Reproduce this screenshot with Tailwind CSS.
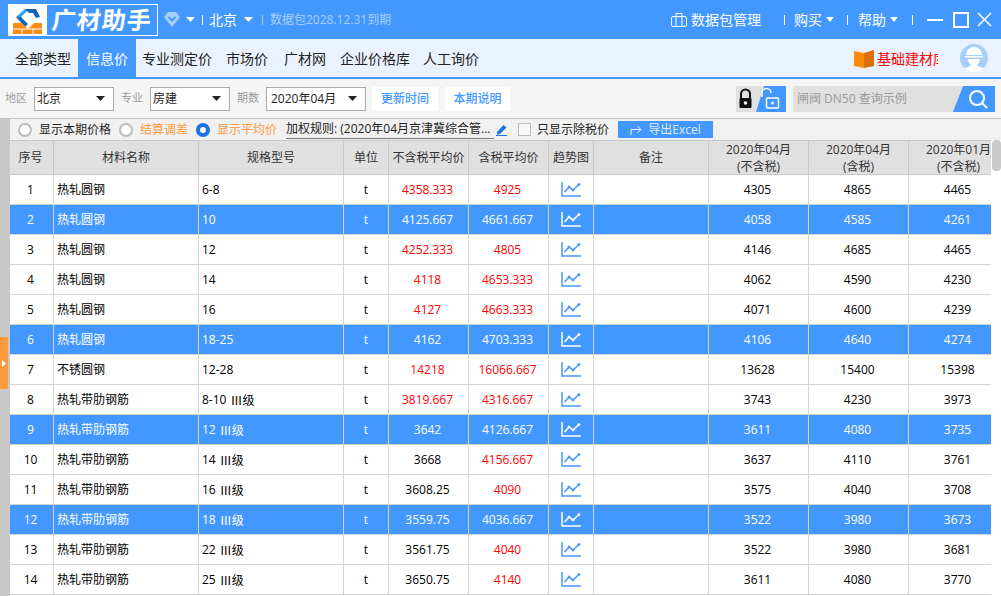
<!DOCTYPE html>
<html lang="zh-CN">
<head>
    <meta charset="UTF-8">
    <title>广材助手</title>
    <script src="https://cdn.jsdelivr.net/npm/@tailwindcss/browser@4"></script>
</head>
<body class="w-[1001px] h-[596px] overflow-hidden bg-white text-[12px] text-[#222] font-['Open_Sans','Noto_Sans_CJK_SC',sans-serif]">
    <!-- Title bar -->
    <div class="h-[39px] bg-[#4398ff] flex items-center text-white">
        <div class="ml-[8px] w-[150px] h-[32px] border border-white flex">
            <div class="w-[38px] bg-white">
                <svg width="38" height="30" viewBox="0 0 38 30">
                    <path d="M7 12 L16 4 L20 4 L12 12 Z" fill="#22a7f0"/>
                    <path d="M7 12 L12 12 L19 19 L16 22 Z" fill="#1464b4"/>
                    <path d="M16 4 L27 4 L31 12 L27 13 L24 8 L20 8 Z" fill="#1464b4"/>
                    <path d="M4 18 L13 18 L19 24 L25 18 L33 18 L33 29 L4 29 Z" fill="#ff8a14"/>
                    <path d="M4 24 H33 M13 24 V29 M24 24 V29" stroke="#fff" stroke-width="1"/>
                </svg>
            </div>
            <div class="flex-1 flex items-center pl-[5px] text-[24px] leading-none font-bold -skew-x-6 tracking-[1px]">广材助手</div>
        </div>
        <svg class="ml-[6px]" width="16" height="17" viewBox="0 0 16 17"><path d="M4 1 H12 L16 6 L8 16 L0 6 Z" fill="#a9cff9"/><path d="M4.500 6 L8 9.500 L11.500 6" fill="none" stroke="#4398ff" stroke-width="2"/></svg>
        <svg class="ml-[6px]" width="9" height="5" viewBox="0 0 9 5"><path d="M0 0 H9 L4.500 5 Z" fill="#fff"/></svg>
        <div class="ml-[7px] w-px h-[10px] bg-white"></div>
        <span class="ml-[6px] text-[14px]">北京</span>
        <svg class="ml-[7px]" width="9" height="5" viewBox="0 0 9 5"><path d="M0 0 H9 L4.500 5 Z" fill="#fff"/></svg>
        <div class="ml-[9px] w-px h-[10px] bg-[#a9cff9]"></div>
        <span class="ml-[7px] text-[#a9cff9]">数据包2028.12.31到期</span>

        <svg class="ml-auto" width="16" height="15" viewBox="0 0 16 15" fill="none" stroke="#fff" stroke-width="1"><rect x="0.500" y="4.500" width="15" height="10" rx="1.500"/><path d="M5 14 V1.500 H11 V14"/></svg>
        <span class="ml-[4px] text-[14px]">数据包管理</span>
        <div class="ml-[23px] w-px h-[10px] bg-white"></div>
        <span class="ml-[9px] text-[14px]">购买</span>
        <svg class="ml-[4px]" width="8" height="5" viewBox="0 0 8 5"><path d="M0 0 H8 L4 5 Z" fill="#fff"/></svg>
        <div class="ml-[13px] w-px h-[10px] bg-white"></div>
        <span class="ml-[10px] text-[14px]">帮助</span>
        <svg class="ml-[4px]" width="8" height="5" viewBox="0 0 8 5"><path d="M0 0 H8 L4 5 Z" fill="#fff"/></svg>
        <div class="ml-[14px] w-px h-[10px] bg-white"></div>
        <div class="ml-[14px] w-[16px] h-[2px] bg-white"></div>
        <div class="ml-[10px] w-[16px] h-[16px] border-2 border-white"></div>
        <svg class="ml-[8px] mr-[9px]" width="15" height="15" viewBox="0 0 15 15"><path d="M1 1 L14 14 M14 1 L1 14" stroke="#fff" stroke-width="1.500"/></svg>
    </div>

    <!-- Nav tabs -->
    <div class="h-[40px] bg-[#ebf2ff] border-b-2 border-[#4398ff] flex items-center text-[14px]">
        <span class="ml-[15px]">全部类型</span>
        <span class="ml-[7px] w-[58px] h-full flex items-center justify-center bg-[#4398ff] text-white">信息价</span>
        <span class="ml-[6px]">专业测定价</span>
        <span class="ml-[14px]">市场价</span>
        <span class="ml-[16px]">广材网</span>
        <span class="ml-[14px]">企业价格库</span>
        <span class="ml-[13px]">人工询价</span>
        <svg class="ml-auto" width="20" height="19" viewBox="0 0 20 19"><path d="M0 2 L10 4 V19 L0 17 Z" fill="#ff8a0a"/><path d="M10 4 L20 1 V17 L10 19 Z" fill="#d96f06"/></svg>
        <span class="ml-[3px] w-[61px] overflow-hidden whitespace-nowrap text-[#ff0000]">基础建材库</span>
        <svg class="ml-[22px] mr-[13px]" width="28" height="28" viewBox="0 0 28 28">
            <circle cx="14" cy="14" r="14" fill="#a6d0fb"/>
            <path d="M6 11 A8 8 0 0 1 22 11 Z" fill="#fff"/>
            <rect x="5" y="12" width="18" height="1.500" fill="#fff"/>
            <path d="M8 15 H20 C20 19 17 20 17 21 C19 23 22 24 24 24 A14 14 0 0 1 4 24 C6 24 9 23 11 21 C11 20 8 19 8 15 Z" fill="#fff"/>
        </svg>
    </div>

    <!-- Filter toolbar -->
    <div class="h-[40px] bg-[#f5f5f5] border-b border-[#c4c4c4] flex items-center">
        <span class="ml-[5px] w-[22px] text-[11px] text-[#9a9a9a]">地区</span>
        <div class="ml-[7px] w-[80px] h-[24px] bg-white border border-[#aaa] flex items-center justify-between pl-[2px] pr-[8px]">北京<svg width="9" height="5" viewBox="0 0 9 5"><path d="M0 0 H9 L4.500 5 Z" fill="#222"/></svg></div>
        <span class="ml-[7px] w-[22px] text-[11px] text-[#9a9a9a]">专业</span>
        <div class="ml-[7px] w-[80px] h-[24px] bg-white border border-[#aaa] flex items-center justify-between pl-[2px] pr-[8px]">房建<svg width="9" height="5" viewBox="0 0 9 5"><path d="M0 0 H9 L4.500 5 Z" fill="#222"/></svg></div>
        <span class="ml-[7px] w-[22px] text-[11px] text-[#9a9a9a]">期数</span>
        <div class="ml-[7px] w-[100px] h-[24px] bg-white border border-[#aaa] flex items-center justify-between pl-[4px] pr-[8px]">2020年04月<svg width="9" height="5" viewBox="0 0 9 5"><path d="M0 0 H9 L4.500 5 Z" fill="#222"/></svg></div>
        <div class="ml-[6px] w-[66px] h-[24px] bg-white flex items-center justify-center font-medium text-[#4398ff]">更新时间</div>
        <div class="ml-[7px] w-[65px] h-[24px] bg-white flex items-center justify-center font-medium text-[#4398ff]">本期说明</div>

        <!-- lock toggle -->
        <div class="ml-auto w-[50px] h-[26px] bg-[#e0e0e0] relative overflow-hidden">
            <svg class="absolute left-0 top-0" width="50" height="26" viewBox="0 0 50 26">
                <path d="M28 0 H50 V26 H20 Z" fill="#4398ff"/>
                <path d="M5 12 V8 A4.500 4.500 0 0 1 14 8 V12" fill="none" stroke="#111" stroke-width="2"/>
                <rect x="3.500" y="12" width="12" height="10" rx="1" fill="#111"/><circle cx="9.500" cy="17" r="1.800" fill="#fff"/>
                <path d="M26 11 V7 A4.500 4.500 0 0 1 35 7" fill="none" stroke="#fff" stroke-width="1.500"/>
                <rect x="30.500" y="12" width="12" height="10" rx="1" fill="none" stroke="#fff" stroke-width="1.500"/><circle cx="36.500" cy="17" r="1.500" fill="#fff"/>
            </svg>
        </div>
        <!-- search -->
        <div class="ml-[7px] mr-[6px] w-[202px] h-[26px] bg-[#e0e0e0] relative flex items-center pl-[4px] text-[#999] overflow-hidden">
            闸阀 DN50 查询示例
            <svg class="absolute right-0 top-0" width="42" height="26" viewBox="0 0 42 26">
                <path d="M10 0 H42 V26 H0 Z" fill="#4398ff"/>
                <circle cx="24" cy="12" r="7" fill="none" stroke="#fff" stroke-width="2"/>
                <path d="M29 17 L34 22" stroke="#fff" stroke-width="2"/>
            </svg>
        </div>
    </div>

    <!-- Options row + table -->
    <div class="flex h-[477px]">
        <div class="w-[10px] shrink-0 bg-[#c8c8c6] relative">
            <div class="absolute left-0 top-[218px] w-[8px] h-[52px] bg-[#ff9a3c] flex items-center justify-center">
                <svg width="4" height="7" viewBox="0 0 4 7"><path d="M0 0 L4 3.500 L0 7 Z" fill="#fff"/></svg>
            </div>
        </div>
        <div class="flex-1 min-w-0 flex flex-col">
            <div class="h-[21px] shrink-0 bg-[#f1f1f1] flex items-center">
                <span class="ml-[8px] w-[14px] h-[14px] rounded-full border-2 border-[#bbb] bg-white"></span>
                <span class="ml-[7px]">显示本期价格</span>
                <span class="ml-[8px] w-[14px] h-[14px] rounded-full border-2 border-[#bbb] bg-white"></span>
                <span class="ml-[7px] text-[#ff9a3c]">结算调差</span>
                <span class="ml-[8px] w-[14px] h-[14px] rounded-full border-[4px] border-[#1a73e8] bg-white"></span>
                <span class="ml-[7px] text-[#ff9a3c]">显示平均价</span>
                <span class="ml-[9px] w-[208px] border-b border-[#777] whitespace-nowrap overflow-hidden">加权规则: (2020年04月京津冀综合管...</span>
                <svg class="ml-[2px]" width="11" height="12" viewBox="0 0 11 12"><path d="M1 8 L7.500 1 L10.500 3.500 L4 10 L1 10.500 Z" fill="#1a73e8"/><rect x="0" y="11" width="11" height="1" fill="#1a73e8"/></svg>
                <span class="ml-[11px] w-[13px] h-[13px] border border-[#bbb] bg-[#f7f7f7]"></span>
                <span class="ml-[6px]">只显示除税价</span>
                <div class="ml-[9px] w-[95px] h-[17px] bg-[#4398ff] text-white flex items-center justify-center gap-[6px]">
                    <svg width="12" height="10" viewBox="0 0 12 10" fill="none" stroke="#fff" stroke-width="1"><path d="M1 10 V4.500 H10.500 M7.500 1 L11 4.500 L7.500 8"/></svg>
                    <span class="text-[#dcebff]">导出Excel</span>
                </div>
            </div>
            <div class="flex flex-1 min-h-0 overflow-hidden">
                <div class="w-[981px] overflow-hidden">
                    <div class="w-[1099px]" id="grid">
                        <div class="grid grid-cols-[44px_145px_145px_45px_80px_80px_45px_115px_100px_100px_100px] h-[35px] bg-[#e0e0e0] border-y border-[#c8c8c8] text-[#333] text-center">
                            <div class="flex items-center justify-center pr-[2px] border-r border-[#c8c8c8]">序号</div>
                            <div class="flex items-center justify-center border-r border-[#c8c8c8]">材料名称</div>
                            <div class="flex items-center justify-center border-r border-[#c8c8c8]">规格型号</div>
                            <div class="flex items-center justify-center border-r border-[#c8c8c8]">单位</div>
                            <div class="flex items-center justify-center border-r border-[#c8c8c8]">不含税平均价</div>
                            <div class="flex items-center justify-center border-r border-[#c8c8c8]">含税平均价</div>
                            <div class="flex items-center justify-center border-r border-[#c8c8c8]">趋势图</div>
                            <div class="flex items-center justify-center border-r border-[#c8c8c8]">备注</div>
                            <div class="leading-[17px] border-r border-[#c8c8c8]">2020年04月<br>(不含税)</div>
                            <div class="leading-[17px] border-r border-[#c8c8c8]">2020年04月<br>(含税)</div>
                            <div class="leading-[17px] border-r border-[#c8c8c8]">2020年01月<br>(不含税)</div>
                        </div>
                    </div>
                </div>
                <div class="w-[10px] shrink-0 bg-white">
                    <div class="mx-auto w-[9px] h-[31px] rounded-[4px] bg-[#c9c9c9]"></div>
                </div>
            </div>
        </div>
    </div>

    <script>
        // the wide roman numeral only exists in the CJK font
        const g3 = '<span class="ml-[4px] font-[family-name:Noto_Sans_CJK_SC]">Ⅲ级</span>';

        // no, name, spec, avg excl, avg incl, three price columns, selected, red flags
        const rows = [
            [1, '热轧圆钢', '6-8', '4358.333', '4925', 4305, 4865, 4465, 0, 1, 1],
            [2, '热轧圆钢', '10', '4125.667', '4661.667', 4058, 4585, 4261, 1, 0, 0],
            [3, '热轧圆钢', '12', '4252.333', '4805', 4146, 4685, 4465, 0, 1, 1],
            [4, '热轧圆钢', '14', '4118', '4653.333', 4062, 4590, 4230, 0, 1, 1],
            [5, '热轧圆钢', '16', '4127', '4663.333', 4071, 4600, 4239, 0, 1, 1],
            [6, '热轧圆钢', '18-25', '4162', '4703.333', 4106, 4640, 4274, 1, 0, 0],
            [7, '不锈圆钢', '12-28', '14218', '16066.667', 13628, 15400, 15398, 0, 1, 1],
            [8, '热轧带肋钢筋', '8-10' + g3, '3819.667', '4316.667', 3743, 4230, 3973, 0, 1, 1],
            [9, '热轧带肋钢筋', '12' + g3, '3642', '4126.667', 3611, 4080, 3735, 1, 0, 0],
            [10, '热轧带肋钢筋', '14' + g3, '3668', '4156.667', 3637, 4110, 3761, 0, 0, 1],
            [11, '热轧带肋钢筋', '16' + g3, '3608.25', '4090', 3575, 4040, 3708, 0, 0, 1],
            [12, '热轧带肋钢筋', '18' + g3, '3559.75', '4036.667', 3522, 3980, 3673, 1, 0, 0],
            [13, '热轧带肋钢筋', '22' + g3, '3561.75', '4040', 3522, 3980, 3681, 0, 0, 1],
            [14, '热轧带肋钢筋', '25' + g3, '3650.75', '4140', 3611, 4080, 3770, 0, 0, 1],
        ];

        const grid = document.getElementById('grid');
        rows.forEach(([no, name, spec, avg, avgTax, p1, p2, p3, selected, redA, redB]) => {
            const row = document.createElement('div');
            const stroke = selected ? '#fff' : '#4398ff';
            const colA = selected ? '' : redA ? 'text-[#ff0000]' : 'text-black';
            const colB = selected ? '' : redB ? 'text-[#ff0000]' : 'text-black';
            row.className = 'grid grid-cols-[44px_145px_145px_45px_80px_80px_45px_115px_100px_100px_100px] h-[30px] border-b border-[#d4d4d4] ' +
                (selected ? 'bg-[#4398ff] text-white' : 'bg-white text-black');
            row.innerHTML = `
                <div class="flex items-center justify-center pr-[2px] border-r border-[#d4d4d4]">${no}</div>
                <div class="flex items-center pl-[3px] border-r border-[#d4d4d4]">${name}</div>
                <div class="flex items-center pl-[3px] border-r border-[#d4d4d4]">${spec}</div>
                <div class="flex items-center justify-center border-r border-[#d4d4d4]">t</div>
                <div class="flex items-center justify-center pr-[2px] border-r border-[#d4d4d4] ${colA}">${avg}</div>
                <div class="flex items-center justify-center pr-[2px] border-r border-[#d4d4d4] ${colB}">${avgTax}</div>
                <div class="flex items-center justify-center border-r border-[#d4d4d4]">
                    <svg width="20" height="15" viewBox="0 0 20 15" fill="none" stroke="${stroke}">
                        <path d="M1 0 V14 H20" stroke-width="1.500"/>
                        <path d="M3.500 10 L8 5 L12 8 L18 2.500" stroke-width="1.500"/>
                        <circle cx="8" cy="5" r="1" fill="${stroke}"/><circle cx="12" cy="8" r="1" fill="${stroke}"/><circle cx="18" cy="2.500" r="1" fill="${stroke}"/>
                    </svg>
                </div>
                <div class="border-r border-[#d4d4d4]"></div>
                <div class="flex items-center justify-center pr-[2px] border-r border-[#d4d4d4]">${p1}</div>
                <div class="flex items-center justify-center pr-[2px] border-r border-[#d4d4d4]">${p2}</div>
                <div class="flex items-center justify-center pr-[2px] border-r border-[#d4d4d4]">${p3}</div>`;
            grid.appendChild(row);
        });
    </script>
</body>
</html>
